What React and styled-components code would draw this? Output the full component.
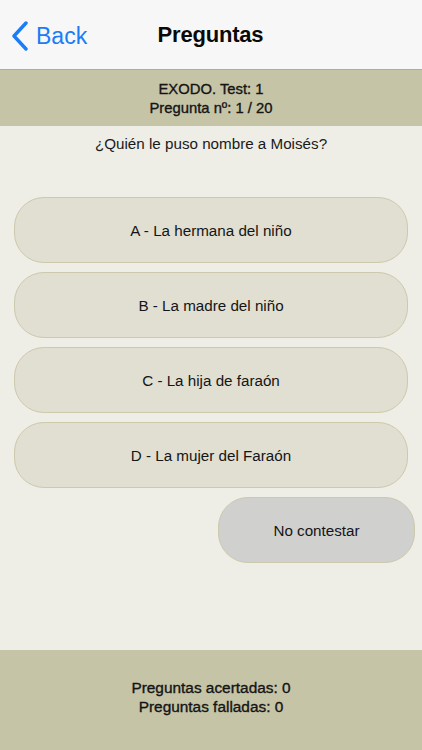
import styled, { createGlobalStyle } from 'styled-components'

const GlobalStyle = createGlobalStyle`
  html, body {
    margin: 0;
    padding: 0;
  }
  body {
    font-family: 'Liberation Sans', Arial, sans-serif;
    color: #111;
  }
`

const options = [
  'A - La hermana del niño',
  'B - La madre del niño',
  'C - La hija de faraón',
  'D - La mujer del Faraón',
]

export default function App() {
  return (
    <>
      <GlobalStyle />
      <Screen>
        <NavBar>
          <BackButton>
            <svg width="18" height="30" viewBox="0 0 18 30">
              <polyline
                points="15,2 3,15 15,28"
                fill="none"
                stroke="#1a7cf6"
                strokeWidth="3.4"
                strokeLinecap="round"
                strokeLinejoin="round"
              />
            </svg>
            <BackText>Back</BackText>
          </BackButton>
          <Title>Preguntas</Title>
        </NavBar>

        <InfoBar>
          <InfoLine>EXODO. Test: 1</InfoLine>
          <InfoLine>Pregunta nº: 1 / 20</InfoLine>
        </InfoBar>

        <Body>
          <Question>¿Quién le puso nombre a Moisés?</Question>
          <Options>
            {options.map((o) => (
              <Option key={o}>{o}</Option>
            ))}
          </Options>
          <SkipRow>
            <Option variant="skip">No contestar</Option>
          </SkipRow>
        </Body>

        <Footer>
          <InfoLine wide>Preguntas acertadas: 0</InfoLine>
          <InfoLine wide>Preguntas falladas: 0</InfoLine>
        </Footer>
      </Screen>
    </>
  )
}

const Screen = styled.div`
  width: 422px;
  height: 750px;
  display: flex;
  flex-direction: column;
  background-color: #eeede6;
  overflow: hidden;
`

const NavBar = styled.div`
  position: relative;
  height: 69px;
  flex-shrink: 0;
  background-color: #f7f7f7;
  border-bottom: 1px solid #ababab;
  display: flex;
  align-items: center;
  justify-content: center;
`

const BackButton = styled.div`
  position: absolute;
  left: 11px;
  top: 21px;
  display: flex;
  align-items: center;
  gap: 7px;
`

const BackText = styled.span`
  font-size: 23px;
  color: #1a7cf6;
  line-height: 30px;
`

const Title = styled.span`
  font-size: 22px;
  font-weight: 700;
  color: #0a0a0a;
  letter-spacing: -0.2px;
  margin-left: -1px;
`

const InfoBar = styled.div`
  height: 55px;
  flex-shrink: 0;
  background-color: #c5c4a7;
  display: flex;
  flex-direction: column;
  align-items: center;
  justify-content: center;
  padding-top: 1px;
`

const InfoLine = styled.div`
  font-size: ${({ wide }) => (wide ? '15.4px' : '14.8px')};
  line-height: 19px;
  color: #141414;
  text-align: center;
  -webkit-text-stroke: 0.35px #141414;
`

const Body = styled.div`
  flex: 1;
  display: flex;
  flex-direction: column;
`

const Question = styled.div`
  font-size: 15.2px;
  line-height: 20px;
  text-align: center;
  padding-top: 8px;
  color: #1a1a1a;
`

const Options = styled.div`
  display: flex;
  flex-direction: column;
  gap: 9px;
  padding: 43px 14px 0;
`

const SkipRow = styled.div`
  display: flex;
  justify-content: flex-end;
  padding: 9px 7px 0 0;
`

const Option = styled.div`
  box-sizing: border-box;
  height: 66px;
  width: ${({ variant }) => (variant === 'skip' ? '197px' : '100%')};
  border-radius: 30px;
  border: 1.5px solid #ccc9ac;
  background-color: ${({ variant }) => (variant === 'skip' ? '#d0d0cf' : '#e0dfd2')};
  display: flex;
  align-items: center;
  justify-content: center;
  font-size: 15.2px;
  color: #151515;
`

const Footer = styled.div`
  height: 100px;
  flex-shrink: 0;
  background-color: #c5c4a7;
  display: flex;
  flex-direction: column;
  align-items: center;
  padding-top: 28px;
  box-sizing: border-box;
`
